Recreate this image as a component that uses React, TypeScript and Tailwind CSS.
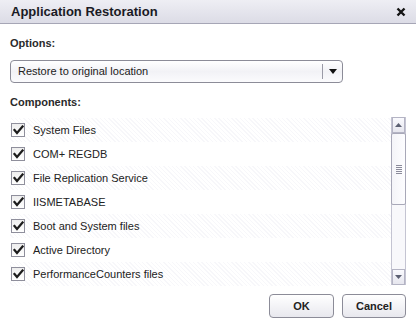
import { useState } from 'react'

const items = [
  'System Files',
  'COM+ REGDB',
  'File Replication Service',
  'IISMETABASE',
  'Boot and System files',
  'Active Directory',
  'PerformanceCounters files',
]

function Check({ on }: { on: boolean }) {
  return (
    <div className="w-[14px] h-[14px] border border-[#8f8f9c] bg-gradient-to-b from-[#eeeeee] to-[#ffffff] flex items-center justify-center shrink-0">
      {on && (
        <svg width="11" height="10" viewBox="0 0 11 10">
          <path d="M1.5 5 L4 8 L9.5 1.5" stroke="#1c1c1c" strokeWidth="2.2" fill="none" strokeLinecap="square" />
        </svg>
      )}
    </div>
  )
}

function ScrollArrow({ down }: { down?: boolean }) {
  return (
    <div className="h-[16px] border border-[#b4b4c4] bg-gradient-to-b from-[#fafafe] to-[#e6e6ee] flex items-center justify-center">
      <svg width="7" height="4" viewBox="0 0 7 4">
        <path d={down ? 'M0 0 L7 0 L3.5 4 Z' : 'M0 4 L7 4 L3.5 0 Z'} fill="#5c6072" />
      </svg>
    </div>
  )
}

export default function App() {
  const [checked, setChecked] = useState(items.map(() => true))

  return (
    <div className="w-[416px] h-[323px] bg-white overflow-hidden text-[#1e1e1e]" style={{ fontFamily: '"Liberation Sans", Arial, sans-serif' }}>
      {/* title bar */}
      <div className="h-[24px] flex items-center justify-between pl-[11px] pr-[10px] bg-gradient-to-b from-[#eeeef4] to-[#dcdce6] border-b border-[#a6a6b6]">
        <span className="text-[13px] font-bold text-[#1a1a24]">Application Restoration</span>
        <svg width="10" height="10" viewBox="0 0 10 10">
          <path d="M1.5 1.5 L8.5 8.5 M8.5 1.5 L1.5 8.5" stroke="#141414" strokeWidth="2.4" />
        </svg>
      </div>

      <div className="px-[10px]">
        <div className="pt-[12px] text-[11px] font-bold text-[#2a2a2a] leading-[14px]">Options:</div>

        {/* dropdown */}
        <div className="mt-[10px] w-[333px] h-[23px] rounded-[4px] border border-[#8c8c98] bg-gradient-to-b from-[#ffffff] via-[#f2f2f6] to-[#fbfbfd] flex items-center">
          <span className="flex-1 pl-[7px] text-[11px] text-[#222]">Restore to original location</span>
          <div className="w-px h-[15px] bg-[#9a9aa6]" />
          <div className="w-[19px] flex items-center justify-center">
            <svg width="8" height="5" viewBox="0 0 8 5">
              <path d="M0 0 L8 0 L4 5 Z" fill="#111" />
            </svg>
          </div>
        </div>

        <div className="mt-[12px] text-[11px] font-bold text-[#2a2a2a] leading-[14px]">Components:</div>

        {/* list */}
        <div className="mt-[8px] h-[168px] flex">
          <div className="flex-1 pt-[1px]">
            {items.map((name, i) => (
              <div
                key={name}
                onClick={() => setChecked(c => c.map((v, j) => (j === i ? !v : v)))}
                className={`h-[24px] flex items-center gap-[8px] pl-[1px] ${i % 2 === 0 ? 'bg-[repeating-linear-gradient(45deg,#ffffff_0px,#ffffff_2px,#f7f7fa_2px,#f7f7fa_3px)]' : 'bg-white'}`}
              >
                <Check on={checked[i]} />
                <span className="text-[11px] text-[#222]">{name}</span>
              </div>
            ))}
          </div>
          <div className="w-[15px] flex flex-col bg-[#f8f8fb] border-x border-[#c4c4d2]">
            <ScrollArrow />
            <div className="h-[72px] mx-[-1px] border border-[#a8a8b8] rounded-[2px] bg-gradient-to-r from-[#f4f4f8] to-[#fdfdff] flex items-center justify-center">
              <div className="flex flex-col gap-[1px]">
                <div className="w-[6px] h-px bg-[#8a8a9a]" />
                <div className="w-[6px] h-px bg-[#8a8a9a]" />
                <div className="w-[6px] h-px bg-[#8a8a9a]" />
                <div className="w-[6px] h-px bg-[#8a8a9a]" />
                <div className="w-[6px] h-px bg-[#8a8a9a]" />
              </div>
            </div>
            <div className="flex-1" />
            <ScrollArrow down />
          </div>
        </div>

        {/* buttons */}
        <div className="mt-[9px] flex justify-end gap-[8px]">
          <button className="w-[65px] h-[24px] rounded-[4px] border border-[#8c8c98] bg-gradient-to-b from-[#ffffff] to-[#e8e8ee] text-[11px] font-bold text-[#222]">OK</button>
          <button className="w-[64px] h-[24px] rounded-[4px] border border-[#8c8c98] bg-gradient-to-b from-[#ffffff] to-[#e8e8ee] text-[11px] font-bold text-[#222]">Cancel</button>
        </div>
      </div>
    </div>
  )
}
